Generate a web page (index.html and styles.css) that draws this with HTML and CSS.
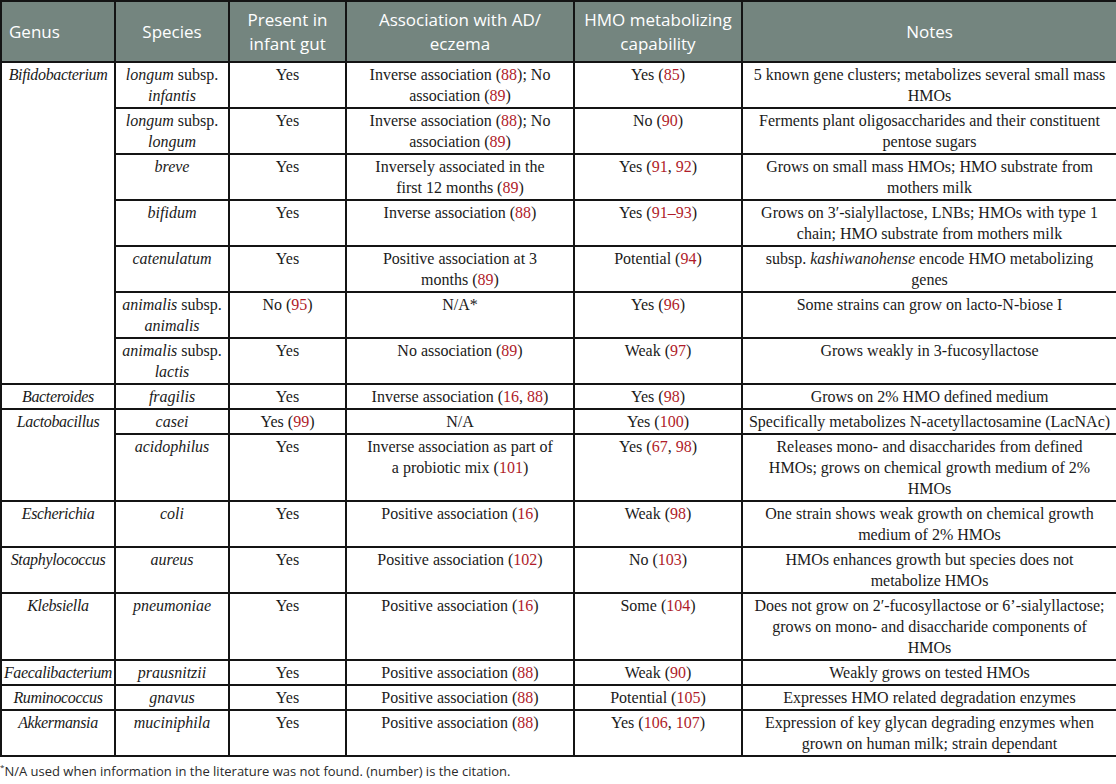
FILE: index.html
```html
<!DOCTYPE html>
<html lang="en">
<head>
<meta charset="utf-8">
<title>HMO metabolizing bacteria</title>
<link rel="stylesheet" href="styles.css">
</head>
<body>
<table class="data">
  <colgroup>
    <col class="c-genus">
    <col class="c-species">
    <col class="c-present">
    <col class="c-assoc">
    <col class="c-hmo">
    <col class="c-notes">
  </colgroup>
  <thead>
    <tr>
      <th class="left">Genus</th>
      <th>Species</th>
      <th>Present in<br>infant gut</th>
      <th>Association with AD/<br>eczema</th>
      <th>HMO metabolizing<br>capability</th>
      <th>Notes</th>
    </tr>
  </thead>
  <tbody>
    <tr>
      <td class="genus" rowspan="7"><i>Bifidobacterium</i></td>
      <td><i>longum</i> subsp.<br><i>infantis</i></td>
      <td>Yes</td>
      <td>Inverse association (<span class="ref">88</span>); No<br>association (<span class="ref">89</span>)</td>
      <td>Yes (<span class="ref">85</span>)</td>
      <td>5 known gene clusters; metabolizes several small mass<br>HMOs</td>
    </tr>
    <tr>
      <td><i>longum</i> subsp.<br><i>longum</i></td>
      <td>Yes</td>
      <td>Inverse association (<span class="ref">88</span>); No<br>association (<span class="ref">89</span>)</td>
      <td>No (<span class="ref">90</span>)</td>
      <td>Ferments plant oligosaccharides and their constituent<br>pentose sugars</td>
    </tr>
    <tr>
      <td><i>breve</i></td>
      <td>Yes</td>
      <td>Inversely associated in the<br>first 12 months (<span class="ref">89</span>)</td>
      <td>Yes (<span class="ref">91</span>, <span class="ref">92</span>)</td>
      <td>Grows on small mass HMOs; HMO substrate from<br>mothers milk</td>
    </tr>
    <tr>
      <td><i>bifidum</i></td>
      <td>Yes</td>
      <td>Inverse association (<span class="ref">88</span>)</td>
      <td>Yes (<span class="ref">91–93</span>)</td>
      <td>Grows on 3′-sialyllactose, LNBs; HMOs with type 1<br>chain; HMO substrate from mothers milk</td>
    </tr>
    <tr>
      <td><i>catenulatum</i></td>
      <td>Yes</td>
      <td>Positive association at 3<br>months (<span class="ref">89</span>)</td>
      <td>Potential (<span class="ref">94</span>)</td>
      <td>subsp. <i>kashiwanohense</i> encode HMO metabolizing<br>genes</td>
    </tr>
    <tr>
      <td><i>animalis</i> subsp.<br><i>animalis</i></td>
      <td>No (<span class="ref">95</span>)</td>
      <td>N/A*</td>
      <td>Yes (<span class="ref">96</span>)</td>
      <td>Some strains can grow on lacto-N-biose I</td>
    </tr>
    <tr>
      <td><i>animalis</i> subsp.<br><i>lactis</i></td>
      <td>Yes</td>
      <td>No association (<span class="ref">89</span>)</td>
      <td>Weak (<span class="ref">97</span>)</td>
      <td>Grows weakly in 3-fucosyllactose</td>
    </tr>
    <tr>
      <td class="genus"><i>Bacteroides</i></td>
      <td><i>fragilis</i></td>
      <td>Yes</td>
      <td>Inverse association (<span class="ref">16</span>, <span class="ref">88</span>)</td>
      <td>Yes (<span class="ref">98</span>)</td>
      <td>Grows on 2% HMO defined medium</td>
    </tr>
    <tr>
      <td class="genus" rowspan="2"><i>Lactobacillus</i></td>
      <td><i>casei</i></td>
      <td>Yes (<span class="ref">99</span>)</td>
      <td>N/A</td>
      <td>Yes (<span class="ref">100</span>)</td>
      <td>Specifically metabolizes N-acetyllactosamine (LacNAc)</td>
    </tr>
    <tr>
      <td><i>acidophilus</i></td>
      <td>Yes</td>
      <td>Inverse association as part of<br>a probiotic mix (<span class="ref">101</span>)</td>
      <td>Yes (<span class="ref">67</span>, <span class="ref">98</span>)</td>
      <td>Releases mono- and disaccharides from defined<br>HMOs; grows on chemical growth medium of 2%<br>HMOs</td>
    </tr>
    <tr>
      <td class="genus"><i>Escherichia</i></td>
      <td><i>coli</i></td>
      <td>Yes</td>
      <td>Positive association (<span class="ref">16</span>)</td>
      <td>Weak (<span class="ref">98</span>)</td>
      <td>One strain shows weak growth on chemical growth<br>medium of 2% HMOs</td>
    </tr>
    <tr>
      <td class="genus"><i>Staphylococcus</i></td>
      <td><i>aureus</i></td>
      <td>Yes</td>
      <td>Positive association (<span class="ref">102</span>)</td>
      <td>No (<span class="ref">103</span>)</td>
      <td>HMOs enhances growth but species does not<br>metabolize HMOs</td>
    </tr>
    <tr>
      <td class="genus"><i>Klebsiella</i></td>
      <td><i>pneumoniae</i></td>
      <td>Yes</td>
      <td>Positive association (<span class="ref">16</span>)</td>
      <td>Some (<span class="ref">104</span>)</td>
      <td>Does not grow on 2′-fucosyllactose or 6’-sialyllactose;<br>grows on mono- and disaccharide components of<br>HMOs</td>
    </tr>
    <tr>
      <td class="genus"><i>Faecalibacterium</i></td>
      <td><i>prausnitzii</i></td>
      <td>Yes</td>
      <td>Positive association (<span class="ref">88</span>)</td>
      <td>Weak (<span class="ref">90</span>)</td>
      <td>Weakly grows on tested HMOs</td>
    </tr>
    <tr>
      <td class="genus"><i>Ruminococcus</i></td>
      <td><i>gnavus</i></td>
      <td>Yes</td>
      <td>Positive association (<span class="ref">88</span>)</td>
      <td>Potential (<span class="ref">105</span>)</td>
      <td>Expresses HMO related degradation enzymes</td>
    </tr>
    <tr>
      <td class="genus"><i>Akkermansia</i></td>
      <td><i>muciniphila</i></td>
      <td>Yes</td>
      <td>Positive association (<span class="ref">88</span>)</td>
      <td>Yes (<span class="ref">106</span>, <span class="ref">107</span>)</td>
      <td>Expression of key glycan degrading enzymes when<br>grown on human milk; strain dependant</td>
    </tr>
  </tbody>
</table>
<p class="footnote"><sup>*</sup>N/A used when information in the literature was not found. (number) is the citation.</p>
</body>
</html>
```

FILE: styles.css
```css
html, body {
  margin: 0;
  padding: 0;
  background: #ffffff;
}

.data {
  width: 1116px;
  border-collapse: collapse;
  table-layout: fixed;
  font-family: "Liberation Serif", "Times New Roman", serif;
  font-size: 16px;
  color: #1a1a1a;
}

.c-genus { width: 114px; }
.c-species { width: 114px; }
.c-present { width: 117px; }
.c-assoc { width: 228px; }
.c-hmo { width: 168px; }
.c-notes { width: 375px; }

.data th {
  background: #74857f;
  color: #ffffff;
  font-family: "Open Sans", "Noto Sans", sans-serif;
  font-weight: 400;
  font-size: 17px;
  line-height: 24px;
  padding: 6px 4px 5px;
  border: 2px solid #141414;
  text-align: center;
  vertical-align: middle;
  white-space: nowrap;
}

.data th.left {
  text-align: left;
  padding-left: 7px;
}

.data td {
  border: 2px solid #141414;
  padding: 1px 3px;
  line-height: 21px;
  text-align: center;
  vertical-align: top;
  white-space: nowrap;
}

.data td.genus {
  padding: 1px 1px;
  letter-spacing: -0.35px;
}

.ref {
  color: #b01c2a;
}

.footnote {
  margin: 5px 0 0 0;
  font-family: "Open Sans", "Noto Sans", sans-serif;
  font-size: 13px;
  line-height: 18px;
  color: #2a2a2a;
}

.footnote sup {
  font-size: 8px;
  vertical-align: top;
  line-height: 10px;
}
```
